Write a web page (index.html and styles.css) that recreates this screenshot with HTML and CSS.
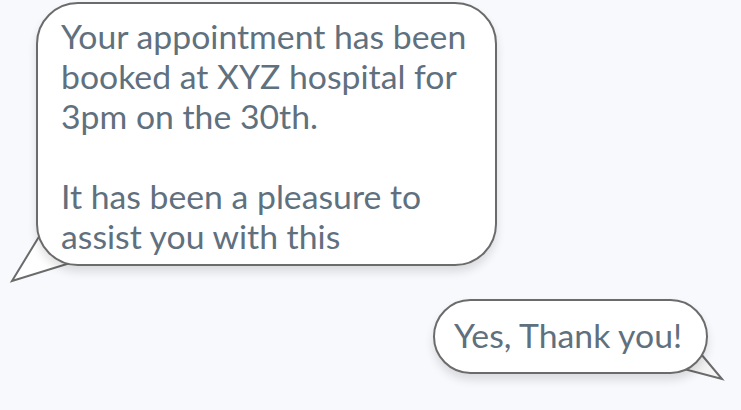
FILE: index.html
```html
<!DOCTYPE html>
<html>
<head>
<meta charset="utf-8">
<link rel="stylesheet" href="styles.css">
</head>
<body>
<div class="chat">
  <div class="msg msg-bot">
    <svg class="tail tail-left" width="70" height="60" viewBox="0 0 70 60"><polygon points="40,3 12,49 67,32" fill="#fff" stroke="#6b6b6b" stroke-width="2" stroke-linejoin="miter"/></svg>
    <div class="bubble bubble-bot">Your appointment has been booked at XYZ hospital for 3pm on the 30th.<br><br>It has been a pleasure to assist you with this</div>
  </div>
  <div class="msg msg-user">
    <svg class="tail tail-right" width="50" height="40" viewBox="0 0 50 40"><polygon points="25,5 46,30 8,20" fill="#f4f4f4" stroke="#6b6b6b" stroke-width="2"/></svg>
    <div class="bubble bubble-user">Yes, Thank you!</div>
  </div>
</div>
</body>
</html>
```
FILE: styles.css
```css
html, body {
  margin: 0;
  padding: 0;
  background: #f8f9fd;
  width: 741px;
  height: 410px;
  overflow: hidden;
}
.chat {
  display: flex;
  flex-direction: column;
  padding-top: 2px;
  font-family: Lato, "Open Sans", sans-serif;
  color: #5f707e;
  font-size: 33.75px;
  line-height: 40px;
}
.msg {
  position: relative;
  display: flex;
}
.msg-bot {
  padding-left: 36px;
}
.msg-user {
  justify-content: flex-end;
  padding-right: 33px;
  margin-top: 33px;
}
.bubble {
  position: relative;
  z-index: 1;
  background: #fff;
  border: 2px solid #6b6b6b;
  box-sizing: border-box;
  box-shadow: 0 6px 10px rgba(0, 0, 0, 0.12);
}
.bubble-bot {
  width: 461px;
  height: 264px;
  border-radius: 42px;
  padding: 12px 20px 0 23px;
}
.bubble-user {
  width: 275px;
  height: 75px;
  border-radius: 38px;
  padding: 14px 0 0 19px;
}
.tail {
  position: absolute;
  z-index: 0;
}
.tail-left {
  left: 0;
  top: 230px;
}
.tail-right {
  right: 15px;
  top: 50px;
}
```
